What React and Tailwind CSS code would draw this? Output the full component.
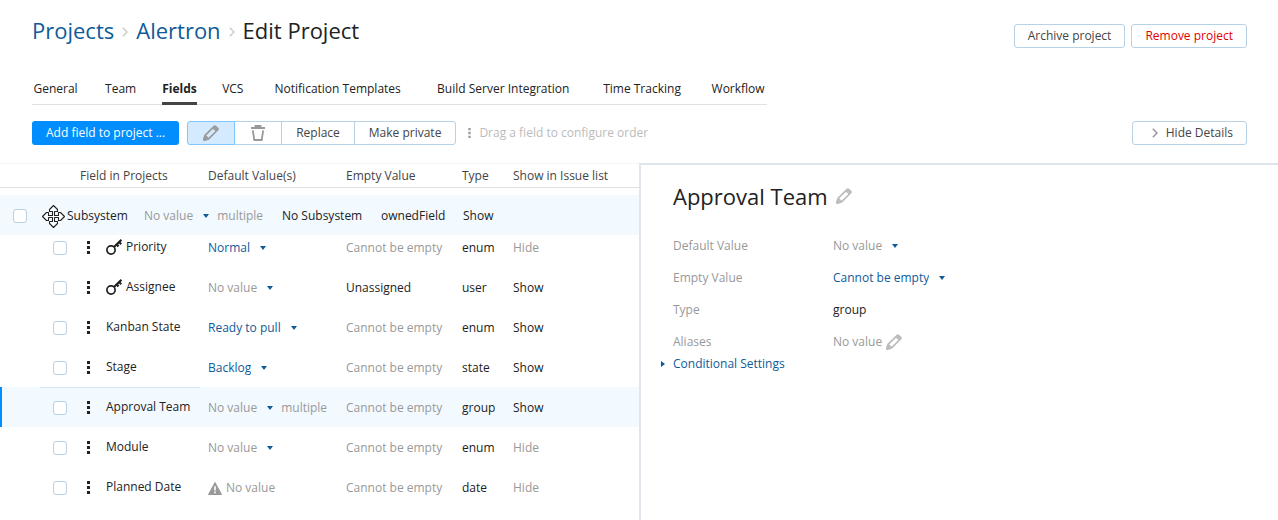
import React from "react";

const tabs = [
  "General",
  "Team",
  "Fields",
  "VCS",
  "Notification Templates",
  "Build Server Integration",
  "Time Tracking",
  "Workflow",
];

const fields = [
  { name: "Priority", key: true, value: "Normal", empty: "Cannot be empty", type: "enum", show: "Hide" },
  { name: "Assignee", key: true, value: "No value", empty: "Unassigned", type: "user", show: "Show" },
  { name: "Kanban State", value: "Ready to pull", empty: "Cannot be empty", type: "enum", show: "Show" },
  { name: "Stage", value: "Backlog", empty: "Cannot be empty", type: "state", show: "Show" },
  { name: "Approval Team", value: "No value", multiple: true, empty: "Cannot be empty", type: "group", show: "Show", selected: true },
  { name: "Module", value: "No value", empty: "Cannot be empty", type: "enum", show: "Hide" },
  { name: "Planned Date", value: "No value", warning: true, empty: "Cannot be empty", type: "date", show: "Hide" },
];

function PencilIcon() {
  return (
    <svg width="16" height="16" viewBox="0 0 16 16" fill="none" stroke="currentColor" strokeWidth="1.7" strokeLinejoin="round" aria-hidden="true">
      <path d="M1 15 2 10.4 11 1.6Q11.8 .8 12.6 1.5L14.6 3.4Q15.3 4.2 14.5 5L5.6 13.9Z" />
      <path d="M2.2 10.6 5.4 13.8M10 2.6 13.5 6" />
      <path d="M11.6 2 14.2 4.4" strokeWidth="1.9" />
      <path d="M1 15 1.5 12.4 3.6 14.4Z" fill="currentColor" />
    </svg>
  );
}

function TrashIcon() {
  return (
    <svg width="16" height="16" viewBox="0 0 16 16" fill="none" stroke="currentColor" strokeWidth="1.8" aria-hidden="true">
      <path d="M1 3H15M5.5 2.6V1H10.5V2.6M2.8 5.4 4.3 15H11.7L13.2 5.4" />
    </svg>
  );
}

function KeyIcon() {
  return (
    <svg width="16" height="16" viewBox="0 0 16 16" fill="none" stroke="#222" strokeWidth="1.7" aria-hidden="true" className="shrink-0">
      <circle cx="5" cy="11" r="4.1" />
      <path d="M8 8 15.4.8" strokeWidth="2.2" />
      <path d="M10.4 5.2 12.6 7.4M12.8 2.8 15.2 5.2" strokeWidth="2.2" />
    </svg>
  );
}

function WarningIcon() {
  return (
    <svg width="14" height="13" viewBox="0 0 14 13" aria-hidden="true" className="shrink-0">
      <path d="M7 .5 13.5 12.5H.5Z" fill="#999" stroke="#999" strokeLinejoin="round" />
      <path d="M7 4.2V8.4M7 9.6V11.2" stroke="#fff" strokeWidth="1.6" />
    </svg>
  );
}

function MoveIcon() {
  return (
    <svg width="23" height="23" viewBox="0 0 23 23" fill="#fff" stroke="#222" strokeWidth="1.1" strokeLinejoin="round" aria-hidden="true" className="shrink-0">
      <path d="M11.5.5 15.5 4.5V6.5H12.5V10.5H16.5V7.5H18.5L22.5 11.5 18.5 15.5H16.5V12.5H12.5V16.5H15.5V18.5L11.5 22.5 7.5 18.5V16.5H10.5V12.5H6.5V15.5H4.5L.5 11.5 4.5 7.5H6.5V10.5H10.5V6.5H7.5V4.5Z" />
    </svg>
  );
}

function DragDots({ className }) {
  return (
    <svg width="3" height="13" viewBox="0 0 3 13" fill="currentColor" aria-hidden="true" className={className}>
      <path d="M0 0H3V3H0ZM0 5H3V8H0ZM0 10H3V13H0Z" />
    </svg>
  );
}

function Chevron({ className }) {
  return (
    <svg width="6" height="10" viewBox="0 0 6 10" fill="none" stroke="currentColor" strokeWidth="1.5" aria-hidden="true" className={className}>
      <path d="M.8.8 5 5 .8 9.2" />
    </svg>
  );
}

function ValueSelect({ label, value }) {
  const color = value === "No value" ? "text-[#999]" : "text-[#0f5b99]";
  return (
    <label className="inline-flex items-center gap-2.5">
      <select aria-label={label} className={`field-sizing-content appearance-none bg-transparent ${color}`}>
        <option>{value}</option>
      </select>
      <svg width="6" height="4" viewBox="0 0 6 4" fill="#0f5b99" aria-hidden="true">
        <path d="M0 0H6L3 4Z" />
      </svg>
    </label>
  );
}

function Checkbox({ label }) {
  return (
    <input
      type="checkbox"
      aria-label={label}
      className="block size-3.5 shrink-0 appearance-none rounded-[3px] border border-[#b8d1e5] bg-white checked:bg-[#008eff]"
    />
  );
}

const buttonStyle = "h-6 rounded-[3px] border border-[#b8d1e5] bg-white";

function FieldRow({ field }) {
  const muted = "text-[#999]";
  return (
    <tr className={field.selected ? "h-10 bg-[#f2f9ff]" : "h-10"}>
      <td className={field.selected ? "relative border-l-2 border-[#008eff] pl-[51px] pt-0.5" : "pl-[53px] pt-0.5"}>
        {field.selected && <div className="absolute left-[38px] top-0 h-px w-40 bg-[#cfe6f7]" />}
        <Checkbox label={`Select ${field.name}`} />
      </td>
      <td>
        <div className="flex items-center gap-1 pl-[7px]">
          <DragDots className="mr-3 shrink-0 text-[#222]" />
          {field.key && <KeyIcon />}
          {field.name}
        </div>
      </td>
      <td className="pt-0.5">
        {field.warning ? (
          <div className="flex items-center gap-1 text-[#999]">
            <WarningIcon />
            {field.value}
          </div>
        ) : (
          <div className="flex items-center gap-2">
            <ValueSelect label={`Default value of ${field.name}`} value={field.value} />
            {field.multiple && <span className={muted}>multiple</span>}
          </div>
        )}
      </td>
      <td className={field.empty === "Cannot be empty" ? "pt-0.5 text-[#999]" : "pt-0.5"}>{field.empty}</td>
      <td className="pt-0.5">{field.type}</td>
      <td className={field.show === "Hide" ? "pt-0.5 text-[#999]" : "pt-0.5"}>{field.show}</td>
    </tr>
  );
}

function DraggedRow() {
  return (
    <div className="absolute inset-x-0 top-[7px] flex h-10 items-center bg-[#f2f9ff] pl-[13px] pt-0.5">
      <Checkbox label="Select Subsystem" />
      <div className="flex w-[117px] items-center gap-0.5 pl-[15px]">
        <MoveIcon />
        Subsystem
      </div>
      <div className="flex w-[138px] items-center gap-2">
        <ValueSelect label="Default value of Subsystem" value="No value" />
        <span className="text-[#999]">multiple</span>
      </div>
      <span className="w-[99px]">No Subsystem</span>
      <span className="w-[82px]">ownedField</span>
      <span>Show</span>
    </div>
  );
}

function DetailRow({ label, children }) {
  return (
    <div className="flex h-8 items-center">
      <dt className="w-40 text-[#999]">{label}</dt>
      <dd className="flex items-center gap-1">{children}</dd>
    </div>
  );
}

export default function App() {
  return (
    <div className="flex min-h-screen flex-col bg-white font-['Open_Sans','Noto_Sans',sans-serif] text-xs text-[#222]">
      <header className="flex items-start justify-between pl-8 pr-[31px] pt-[15px]">
        <h1 className="flex items-center gap-2 text-[22px] leading-[30px]">
          <a href="#projects" className="text-[#0f5b99]">Projects</a>
          <Chevron className="mt-1 text-[#ccc]" />
          <a href="#alertron" className="text-[#0f5b99]">Alertron</a>
          <Chevron className="mt-1 text-[#ccc]" />
          <span>Edit Project</span>
        </h1>
        <div className="flex gap-1.5 pt-[9px]">
          <button type="button" className={`${buttonStyle} px-[13px] text-[#444]`}>Archive project</button>
          <button type="button" className={`${buttonStyle} px-[13px] text-[#e30000]`}>Remove project</button>
        </div>
      </header>

      <nav className="ml-8 mt-8 flex gap-[25px] self-start border-b border-[#dfe1e5]">
        {tabs.map((tab) => (
          <a
            key={tab}
            href={`#${tab}`}
            data-label={tab}
            className={`-mb-px flex h-[25px] flex-col items-center border-b-[3px] leading-[18px] after:invisible after:h-0 after:font-bold after:content-[attr(data-label)] ${
              tab === "Fields" ? "border-[#444] font-bold" : "border-transparent"
            }`}
          >
            {tab}
          </a>
        ))}
      </nav>

      <div className="mt-4 flex items-center pb-[18px] pl-8 pr-[31px]">
        <button type="button" className="h-6 rounded-[3px] bg-[#008eff] px-3.5 text-white">Add field to project ...</button>
        <div className="ml-2 flex">
          <button type="button" aria-label="Edit" className="z-10 flex h-6 w-12 items-center justify-center rounded-l-[3px] border border-[#80c6ff] bg-[#d4ebff] text-[#999]">
            <PencilIcon />
          </button>
          <button type="button" aria-label="Delete" className="-ml-px flex h-6 w-12 items-center justify-center border border-[#b8d1e5] text-[#999]">
            <TrashIcon />
          </button>
          <button type="button" className="-ml-px h-6 border border-[#b8d1e5] px-3.5 text-[#444]">Replace</button>
          <button type="button" className="-ml-px h-6 rounded-r-[3px] border border-[#b8d1e5] px-3.5 text-[#444]">Make private</button>
        </div>
        <div className="ml-3 flex items-center gap-2 text-[#bbb]">
          <DragDots className="h-2.5 text-[#999]" />
          Drag a field to configure order
        </div>
        <button type="button" className={`${buttonStyle} ml-auto flex items-center gap-2 pl-[19px] pr-[13px] text-[#444]`}>
          <Chevron className="text-[#999]" />
          Hide Details
        </button>
      </div>

      <main className="flex grow">
        <section className="w-1/2 border-t border-[#f2f4f7]">
          <table className="w-full table-fixed border-separate border-spacing-0 text-left">
            <colgroup>
              <col className="w-20" />
              <col className="w-32" />
              <col className="w-[138px]" />
              <col className="w-[116px]" />
              <col className="w-[51px]" />
              <col />
            </colgroup>
            <thead>
              <tr className="h-[23px] text-[#444]">
                <td />
                <th className="font-normal">Field in Projects</th>
                <th className="font-normal">Default Value(s)</th>
                <th className="font-normal">Empty Value</th>
                <th className="font-normal">Type</th>
                <th className="font-normal">Show in Issue list</th>
              </tr>
            </thead>
            <tbody>
              <tr className="h-10">
                <td colSpan={6} className="relative border-t border-[#dfe1e5]">
                  <DraggedRow />
                </td>
              </tr>
              {fields.map((field) => (
                <FieldRow key={field.name} field={field} />
              ))}
            </tbody>
          </table>
        </section>

        <aside className="grow border-l-2 border-t-2 border-[#dfe5eb] pl-8 pt-[15px]">
          <h2 className="flex items-center gap-2 text-[22px] leading-8">
            Approval Team
            <button type="button" aria-label="Rename field" className="text-[#bbb]">
              <PencilIcon />
            </button>
          </h2>
          <dl className="mt-[18px]">
            <DetailRow label="Default Value">
              <ValueSelect label="Default Value" value="No value" />
            </DetailRow>
            <DetailRow label="Empty Value">
              <ValueSelect label="Empty Value" value="Cannot be empty" />
            </DetailRow>
            <DetailRow label="Type">group</DetailRow>
            <DetailRow label="Aliases">
              <span className="text-[#999]">No value</span>
              <button type="button" aria-label="Edit aliases" className="text-[#bbb]">
                <PencilIcon />
              </button>
            </DetailRow>
          </dl>
          <button type="button" className="-ml-3 -mt-0.5 flex items-center gap-2 text-[#0f5b99]">
            <svg width="4" height="6" viewBox="0 0 4 6" fill="currentColor" aria-hidden="true">
              <path d="M0 0 4 3 0 6Z" />
            </svg>
            Conditional Settings
          </button>
        </aside>
      </main>
    </div>
  );
}
